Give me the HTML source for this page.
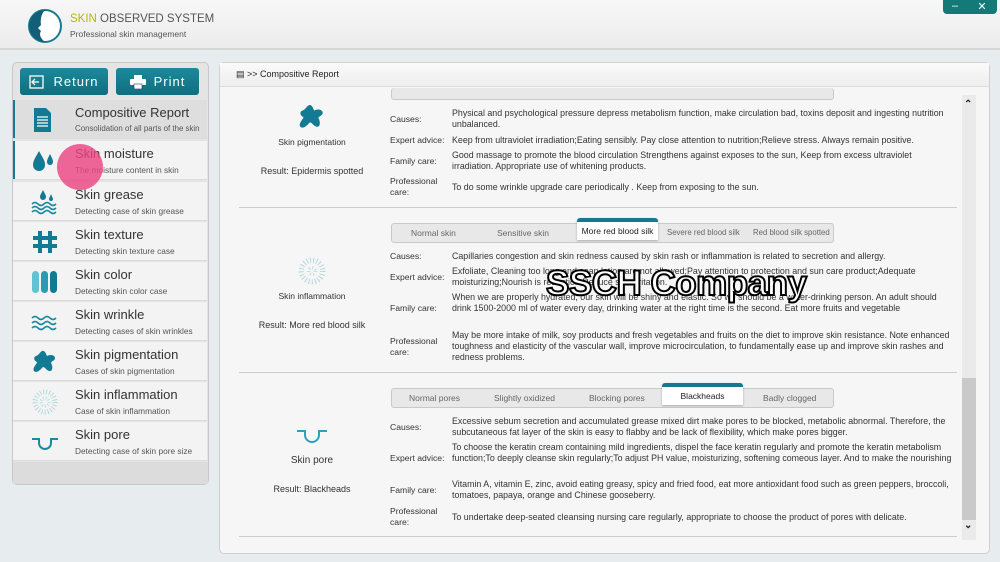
<!DOCTYPE html>
<html><head><meta charset="utf-8"><style>
*{margin:0;padding:0;box-sizing:border-box}
body{width:1000px;height:562px;overflow:hidden;background:#e7ecee;font-family:"Liberation Sans",sans-serif;position:relative;color:#222}
.a{position:absolute}
.hdr{left:0;top:0;width:1000px;height:50px;background:linear-gradient(#f7f7f7,#ececec);border-bottom:2px solid #d6d6d6}
.side{left:12px;top:62px;width:197px;height:423px;background:#e4e4e4;border:1px solid #c8c8c8;border-radius:5px}
.btn{top:68px;height:27px;background:linear-gradient(#1b8a9a,#0f6f80);border-radius:3px;color:#fff;font-size:13px;letter-spacing:1px;display:flex;align-items:center;justify-content:center;gap:8px}
.it{left:13px;width:194px;height:39px;background:#f3f3f3;border-bottom:1px solid #dcdcdc;white-space:nowrap;overflow:hidden}
.it b{position:absolute;left:62px;top:5px;font-size:13px;font-weight:normal;color:#333}
.it i{position:absolute;left:62px;top:24px;font-size:8.3px;font-style:normal;color:#555}
.it svg{position:absolute;left:18px;top:7px}
.main{left:219px;top:62px;width:771px;height:492px;background:#f6f6f6;border:1px solid #cfcfcf;border-radius:5px}
.mh{left:220px;top:63px;width:769px;height:24px;background:linear-gradient(#fafafa,#eeeeee);border-bottom:1px solid #ddd;font-size:9px;padding:6px 0 0 16px}
.lb{left:390px;font-size:8.6px;color:#333;line-height:11px}
.tx{left:452px;width:503px;font-size:8.85px;color:#333;line-height:11px}
.hr{left:239px;width:718px;height:1px;background:#ccc}
.tabs{height:20px;background:#e8e8e8;border:1px solid #c9c9c9;border-radius:3px;font-size:8.5px;color:#666}
.tabs span{position:absolute;top:4px}
.sel{background:#fff;border-top:4px solid #157a90;height:22px;border-radius:3px 3px 0 0;color:#222;font-size:8.5px;text-align:center;padding-top:4px;box-shadow:0 1px 2px #aaa}
.ct{font-size:9px;color:#333;text-align:center;width:150px}
</style></head><body>
<div class="a hdr"></div>
<svg class="a" style="left:27px;top:8px" width="36" height="36" viewBox="0 0 36 36"><circle cx="18" cy="18" r="16" fill="#fff" stroke="#1a7a90" stroke-width="2"/><path d="M18 2A16 16 0 0 0 18 34C13 30 12 26 14 23L11 20 14 17C13 10 15 5 18 2Z" fill="#135f78"/></svg>
<div class="a" style="left:70px;top:13px;font-size:11.5px;color:#555">
<span style="color:#b5b800">SKIN</span> OBSERVED SYSTEM</div>
<div class="a" style="left:70px;top:29px;font-size:8.5px;color:#555">Professional skin management</div>
<div class="a" style="left:943px;top:0;width:24px;height:14px;background:#137a78;border-radius:0 0 0 4px;color:#fff;font-size:11px;text-align:center;line-height:12px">–</div>
<div class="a" style="left:967px;top:0;width:30px;height:14px;background:#137a78;border-radius:0 0 4px 0;color:#fff;font-size:11px;text-align:center;line-height:14px">✕</div>

<div class="a side"></div>
<div class="a" style="left:13px;top:462px;width:195px;height:22px;background:#dcdcdc"></div>
<div class="a btn" style="left:20px;width:88px"><svg width="16" height="14" viewBox="0 0 16 14"><rect x="1" y="1" width="13" height="12" fill="none" stroke="#fff" stroke-width="1.3"/><path d="M10 7H4M6 4 3 7 6 10" fill="none" stroke="#fff" stroke-width="1.3"/></svg>Return</div>
<div class="a btn" style="left:116px;width:83px"><svg width="16" height="14" viewBox="0 0 16 14"><rect x="4" y="0" width="8" height="4" fill="#fff"/><rect x="0" y="4" width="16" height="6" rx="1" fill="#fff"/><rect x="4" y="9" width="8" height="5" fill="#fff" stroke="#137" stroke-width=".6"/></svg>Print</div>

<div class="a it" style="top:100px;background:#dedede;box-shadow:inset 2px 0 #1a7a90"><svg width="22" height="26" viewBox="0 0 22 26"><path d="M3 1H15L20 6V25H3Z" fill="#137a93"/><path d="M6 10H17M6 13H17M6 16H17M6 19H17" stroke="#fff" stroke-width="1.2"/></svg><b>Compositive Report</b><i style="font-size:7.9px">Consolidation of all parts of the skin</i></div>
<div class="a it" style="top:141px;box-shadow:inset 2px 0 #1a7a90"><svg width="26" height="26" viewBox="0 0 26 26"><path d="M8 3C4 10 2 13 2 17A6 6 0 0 0 14 17C14 13 12 10 8 3Z" fill="#137a93"/><path d="M19 6C17 10 16 12 16 14A3 3 0 0 0 22 14C22 12 21 10 19 6Z" fill="#137a93"/></svg><b>Skin moisture</b><i>The moisture content in skin</i></div>
<div class="a it" style="top:182px"><svg width="28" height="26" viewBox="0 0 28 26"><path d="M12 1C10 5 9 6 9 8A3 3 0 0 0 15 8C15 6 14 5 12 1ZM20 5C19 8 18 9 18 10A2 2 0 0 0 22 10C22 9 21 8 20 5Z" fill="#137a93"/><path d="M1 15q3-3 6 0t6 0 6 0 6 0M1 19q3-3 6 0t6 0 6 0 6 0M1 23q3-3 6 0t6 0 6 0 6 0" fill="none" stroke="#1b8aa0" stroke-width="1.6"/></svg><b>Skin grease</b><i>Detecting case of skin grease</i></div>
<div class="a it" style="top:222px"><svg width="28" height="26" viewBox="0 0 28 26"><path d="M9 2V24M19 2V24M2 9H26M2 17H26" stroke="#137a93" stroke-width="4"/></svg><b>Skin texture</b><i>Detecting skin texture case</i></div>
<div class="a it" style="top:262px"><svg width="28" height="26" viewBox="0 0 28 26"><rect x="1" y="2" width="7" height="22" rx="3.5" fill="#5ec3d3"/><rect x="10" y="2" width="7" height="22" rx="3.5" fill="#2a9bb3"/><rect x="19" y="2" width="7" height="22" rx="3.5" fill="#137a93"/></svg><b>Skin color</b><i>Detecting skin color case</i></div>
<div class="a it" style="top:302px"><svg width="28" height="26" viewBox="0 0 28 26"><path d="M1 9q3-3 6 0t6 0 6 0 6 0M1 14q3-3 6 0t6 0 6 0 6 0M1 19q3-3 6 0t6 0 6 0 6 0" fill="none" stroke="#1b8aa0" stroke-width="1.6"/></svg><b>Skin wrinkle</b><i>Detecting cases of skin wrinkles</i></div>
<div class="a it" style="top:342px"><svg width="28" height="26" viewBox="0 0 28 26"><path d="M11 2C14 1 15 5 16 7C19 5 24 6 24 9C24 12 20 12 20 14C22 17 22 23 18 22C15 21 14 18 12 18C10 20 6 25 3 22C1 19 6 15 6 13C3 12 2 8 5 7C8 6 9 3 11 2Z" fill="#137a93"/></svg><b>Skin pigmentation</b><i>Cases of skin pigmentation</i></div>
<div class="a it" style="top:382px"><svg width="28" height="26" viewBox="0 0 28 26"><circle cx="14" cy="13" r="10" fill="none" stroke="#a9d2d8" stroke-width="5" stroke-dasharray="0.8 2.2"/><circle cx="14" cy="13" r="4" fill="none" stroke="#b5d8dc" stroke-width="3" stroke-dasharray="0.8 2"/></svg><b>Skin inflammation</b><i>Case of skin inflammation</i></div>
<div class="a it" style="top:422px"><svg width="28" height="26" viewBox="0 0 28 26"><path d="M1 10H8V14A6 6 0 0 0 20 14V10H27" fill="none" stroke="#1b8aa0" stroke-width="2"/></svg><b>Skin pore</b><i>Detecting case of skin pore size</i></div>
<div class="a" style="left:57px;top:144px;width:46px;height:46px;border-radius:50%;background:rgba(236,70,130,.82)"></div>

<div class="a main"></div>
<div class="a mh">▤ &gt;&gt; Compositive Report</div>
<div class="a" style="left:962px;top:95px;width:14px;height:445px;background:#eaeaea"></div>
<div class="a" style="left:962px;top:378px;width:14px;height:142px;background:#c9c9c9"></div>
<div class="a" style="left:964px;top:99px;font-size:10px;font-weight:bold">⌃</div>
<div class="a" style="left:964px;top:520px;font-size:10px;font-weight:bold">⌄</div>

<!-- section 1 -->
<div class="a tabs" style="left:391px;top:88px;width:443px;height:12px;border-top:none"></div>
<svg class="a" style="left:297px;top:103px" width="30" height="28" viewBox="0 0 28 26"><path d="M11 2C14 1 15 5 16 7C19 5 24 6 24 9C24 12 20 12 20 14C22 17 22 23 18 22C15 21 14 18 12 18C10 20 6 25 3 22C1 19 6 15 6 13C3 12 2 8 5 7C8 6 9 3 11 2Z" fill="#137a93"/></svg>
<div class="a ct" style="left:237px;top:137px;font-size:8.5px">Skin pigmentation</div>
<div class="a ct" style="left:237px;top:166px">Result: Epidermis spotted</div>
<div class="a lb" style="top:114px">Causes:</div>
<div class="a tx" style="top:108px">Physical and psychological pressure depress metabolism function, make circulation bad, toxins deposit and ingesting nutrition unbalanced.</div>
<div class="a lb" style="top:135px">Expert advice:</div>
<div class="a tx" style="top:135px">Keep from ultraviolet irradiation;Eating sensibly. Pay close attention to nutrition;Relieve stress. Always remain positive.</div>
<div class="a lb" style="top:156px">Family care:</div>
<div class="a tx" style="top:150px">Good massage to promote the blood circulation Strengthens against exposes to the sun, Keep from excess ultraviolet irradiation. Appropriate use of whitening products.</div>
<div class="a lb" style="top:176px">Professional<br>care:</div>
<div class="a tx" style="top:182px">To do some wrinkle upgrade care periodically . Keep from exposing to the sun.</div>
<div class="a hr" style="top:207px"></div>

<!-- section 2 -->
<div class="a tabs" style="left:391px;top:223px;width:443px"><span style="left:19px">Normal skin</span><span style="left:105px">Sensitive skin</span><span style="left:275px;font-size:7.8px">Severe red blood silk</span><span style="left:361px;font-size:7.8px">Red blood silk spotted</span></div>
<div class="a sel" style="left:577px;top:218px;width:81px">More red blood silk</div>
<svg class="a" style="left:297px;top:257px" width="30" height="28" viewBox="0 0 28 26"><circle cx="14" cy="13" r="10" fill="none" stroke="#a9d2d8" stroke-width="5" stroke-dasharray="0.8 2.2"/><circle cx="14" cy="13" r="3" fill="none" stroke="#b5d8dc" stroke-width="3" stroke-dasharray="0.8 2"/></svg>
<div class="a ct" style="left:237px;top:291px;font-size:8.5px">Skin inflammation</div>
<div class="a ct" style="left:237px;top:320px">Result: More red blood silk</div>
<div class="a lb" style="top:251px">Causes:</div>
<div class="a tx" style="top:251px">Capillaries congestion and skin redness caused by skin rash or inflammation is related to secretion and allergy.</div>
<div class="a lb" style="top:272px">Expert advice:</div>
<div class="a tx" style="top:266px">Exfoliate, Cleaning too long and soap lotion are not allowed;Pay attention to protection and sun care product;Adequate moisturizing;Nourish is reduction;Reduce skin irritation.</div>
<div class="a lb" style="top:303px">Family care:</div>
<div class="a tx" style="top:292px">When we are properly hydrated, our skin will be shiny and elastic. So we should be a water-drinking person. An adult should drink 1500-2000 ml of water every day, drinking water at the right time is the second. Eat more fruits and vegetable</div>
<div class="a lb" style="top:336px">Professional<br>care:</div>
<div class="a tx" style="top:330px">May be more intake of milk, soy products and fresh vegetables and fruits on the diet to improve skin resistance. Note enhanced toughness and elasticity of the vascular wall, improve microcirculation, to fundamentally ease up and improve skin rashes and redness problems.</div>
<div class="a hr" style="top:372px"></div>

<!-- section 3 -->
<div class="a tabs" style="left:391px;top:388px;width:443px"><span style="left:17px">Normal pores</span><span style="left:102px">Slightly oxidized</span><span style="left:197px">Blocking pores</span><span style="left:371px">Badly clogged</span></div>
<div class="a sel" style="left:662px;top:383px;width:81px">Blackheads</div>
<svg class="a" style="left:296px;top:428px" width="32" height="18" viewBox="0 0 32 18"><path d="M1 3H9V7A7 7 0 0 0 23 7V3H31" fill="none" stroke="#2aa3b8" stroke-width="2"/></svg>
<div class="a ct" style="left:237px;top:455px;font-size:10px">Skin pore</div>
<div class="a ct" style="left:237px;top:484px">Result: Blackheads</div>
<div class="a lb" style="top:422px">Causes:</div>
<div class="a tx" style="top:416px">Excessive sebum secretion and accumulated grease mixed dirt make pores to be blocked, metabolic abnormal. Therefore, the subcutaneous fat layer of the skin is easy to flabby and be lack of flexibility, which make pores bigger.</div>
<div class="a lb" style="top:453px">Expert advice:</div>
<div class="a tx" style="top:442px">To choose the keratin cream containing mild ingredients, dispel the face keratin regularly and promote the keratin metabolism function;To deeply cleanse skin regularly;To adjust PH value, moisturizing, softening comeous layer. And to make the nourishing</div>
<div class="a lb" style="top:485px">Family care:</div>
<div class="a tx" style="top:479px">Vitamin A, vitamin E, zinc, avoid eating greasy, spicy and fried food, eat more antioxidant food such as green peppers, broccoli, tomatoes, papaya, orange and Chinese gooseberry.</div>
<div class="a lb" style="top:506px">Professional<br>care:</div>
<div class="a tx" style="top:512px">To undertake deep-seated cleansing nursing care regularly, appropriate to choose the product of pores with delicate.</div>
<div class="a hr" style="top:536px"></div>

<div class="a" style="left:546px;top:264px;font-size:35px;font-weight:bold;color:#fff;-webkit-text-stroke:2px #000;letter-spacing:-0.5px">SSCH Company</div>
</body></html>
